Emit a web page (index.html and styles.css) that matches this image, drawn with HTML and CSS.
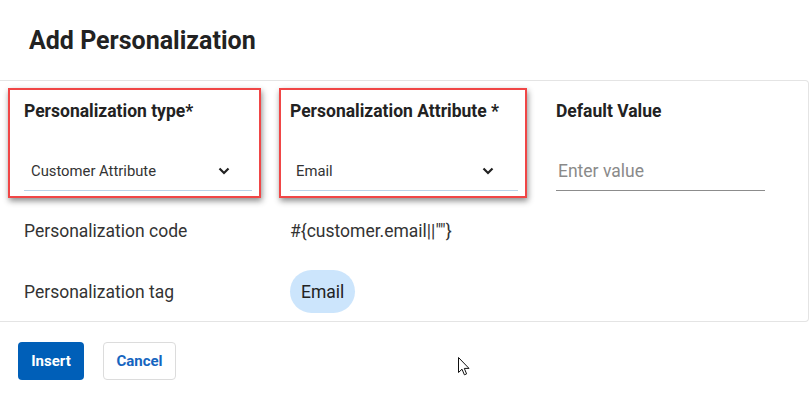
FILE: index.html
```html
<!DOCTYPE html>
<html>
<head>
<meta charset="utf-8">
<link rel="stylesheet" href="styles.css">
</head>
<body>
<div class="dialog">
  <div class="header"><h1 class="title">Add Personalization</h1></div>
  <div class="panel">
    <div class="grid fields">
      <div class="col col-marked mark-1">
        <div class="label">Personalization type*</div>
        <div class="field select">
          <span class="select-text">Customer Attribute</span>
          <svg class="chev" width="12" height="8" viewBox="0 0 12 8"><path d="M1.5 1.5 L6 6 L10.5 1.5" fill="none" stroke="#222" stroke-width="2.2"/></svg>
        </div>
      </div>
      <div class="col col-marked mark-2">
        <div class="label">Personalization Attribute *</div>
        <div class="field select">
          <span class="select-text">Email</span>
          <svg class="chev" width="12" height="8" viewBox="0 0 12 8"><path d="M1.5 1.5 L6 6 L10.5 1.5" fill="none" stroke="#222" stroke-width="2.2"/></svg>
        </div>
      </div>
      <div class="col">
        <div class="label">Default Value</div>
        <div class="field input"><span class="placeholder">Enter value</span></div>
      </div>
    </div>
    <div class="grid row code-row">
      <div class="row-label">Personalization code</div>
      <div class="row-value">#{customer.email||""}</div>
    </div>
    <div class="grid row tag-row">
      <div class="row-label">Personalization tag</div>
      <div class="row-value"><span class="chip">Email</span></div>
    </div>
  </div>
  <div class="footer">
    <button class="btn btn-primary">Insert</button>
    <button class="btn btn-secondary">Cancel</button>
  </div>
  <svg class="cursor" width="13" height="20" viewBox="0 0 13 20"><path d="M0.5 0.5 L0.5 15.5 L4 12.2 L6.4 17.8 L8.6 16.9 L6.3 11.4 L11 11.4 Z" fill="#fff" stroke="#111" stroke-width="1" stroke-linejoin="miter"/></svg>
</div>
</body>
</html>
```
FILE: styles.css
```css
html, body {
  margin: 0;
  padding: 0;
  background: #fff;
}
body {
  font-family: Roboto, "Liberation Sans", sans-serif;
  color: #333;
  width: 810px;
  height: 400px;
  overflow: hidden;
}
.dialog {
  position: relative;
  width: 810px;
  height: 400px;
}
.header {
  height: 80px;
}
.title {
  margin: 0;
  padding-left: 29px;
  font-size: 25px;
  font-weight: 700;
  line-height: 82px;
  color: #222;
}
.panel {
  box-sizing: border-box;
  width: 809px;
  height: 242px;
  border: 1px solid #e4e4e4;
  border-left: none;
  border-radius: 0 4px 4px 0;
}
.grid {
  display: grid;
  grid-template-columns: 228px 228px 209px;
  column-gap: 38px;
  padding-left: 24px;
}
.fields {
  padding-top: 20px;
}
.col {
  position: relative;
}
.label {
  font-size: 17.5px;
  font-weight: 700;
  line-height: 20px;
  color: #222;
}
.field {
  box-sizing: border-box;
  margin-top: 30px;
  height: 40px;
  display: flex;
  align-items: center;
  border-bottom: 1px solid #b9d3e8;
}
.select {
  justify-content: space-between;
  padding-left: 7px;
  padding-right: 22px;
}
.mark-2 .select {
  padding-left: 6px;
  padding-right: 24px;
}
.select-text {
  font-size: 14.8px;
  color: #333;
}
.chev {
  display: block;
}
.input {
  border-bottom-color: #8c8c8c;
  padding-left: 2px;
}
.placeholder {
  font-size: 17.5px;
  color: #8a8a8a;
}
.col-marked::after {
  content: "";
  position: absolute;
  top: -13px;
  bottom: -7px;
  border: 2px solid #f04646;
  box-shadow: 1px 3px 6px rgba(0, 0, 0, 0.45);
  pointer-events: none;
}
.mark-1::after {
  left: -16px;
  right: -9px;
}
.mark-2::after {
  left: -11px;
  right: -9px;
}
.row {
  align-items: center;
}
.code-row {
  margin-top: 30px;
  line-height: 20px;
}
.tag-row {
  margin-top: 29px;
}
.row-label, .row-value {
  font-size: 17.5px;
  color: #333;
}
.row-value {
  grid-column: 2 / 4;
}
.chip {
  display: inline-flex;
  align-items: center;
  height: 43px;
  padding: 0 11px;
  border-radius: 22px;
  background: #cce5fc;
  color: #222;
}
.footer {
  display: flex;
  gap: 19px;
  padding: 20px 0 0 18px;
}
.btn {
  box-sizing: border-box;
  height: 38px;
  border-radius: 4px;
  font-family: Roboto, "Liberation Sans", sans-serif;
  font-size: 15px;
  font-weight: 700;
  cursor: pointer;
}
.btn-primary {
  width: 66px;
  background: #005fb8;
  color: #fff;
  border: none;
}
.btn-secondary {
  width: 73px;
  background: #fff;
  color: #1565c0;
  border: 1px solid #dcdcdc;
}
.cursor {
  position: absolute;
  left: 458px;
  top: 357px;
}
```
